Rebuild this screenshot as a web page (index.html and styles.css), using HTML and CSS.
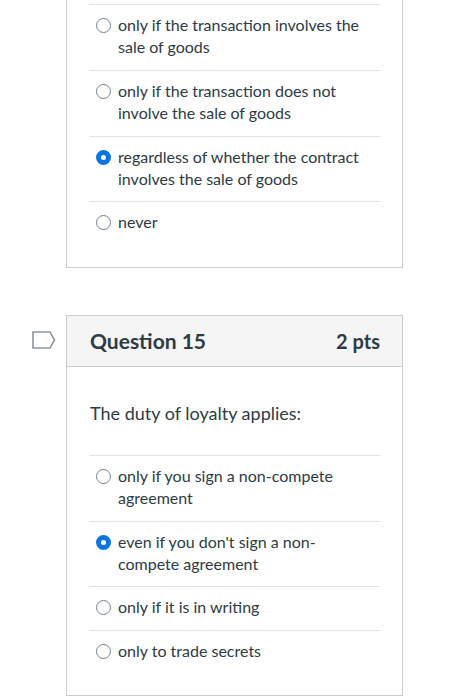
FILE: index.html
```html
<!DOCTYPE html>
<html>
<head>
<meta charset="utf-8">
<link rel="stylesheet" href="styles.css">
</head>
<body>
<div class="question">
  <div class="flag-col"></div>
  <div class="card card-cut">
    <div class="answers">
      <div class="answer"><span class="radio"></span><span class="label">only if the transaction involves the sale of goods</span></div>
      <div class="answer"><span class="radio"></span><span class="label">only if the transaction does not involve the sale of goods</span></div>
      <div class="answer"><span class="radio checked"></span><span class="label">regardless of whether the contract involves the sale of goods</span></div>
      <div class="answer"><span class="radio"></span><span class="label">never</span></div>
    </div>
  </div>
</div>
<div class="question second">
  <div class="flag-col">
    <svg class="flag" width="24" height="18" viewBox="0 0 24 18"><path d="M1 1 H18 L22.5 9 L18 17 H1 Z" fill="none" stroke="#8b969e" stroke-width="1.6" stroke-linejoin="miter"/></svg>
  </div>
  <div class="card">
    <div class="header"><span class="title">Question 15</span><span class="pts">2 pts</span></div>
    <div class="body">
      <p class="prompt">The duty of loyalty applies:</p>
      <div class="answers">
        <div class="answer"><span class="radio"></span><span class="label">only if you sign a non-compete agreement</span></div>
        <div class="answer"><span class="radio checked"></span><span class="label">even if you don't sign a non-compete agreement</span></div>
        <div class="answer"><span class="radio"></span><span class="label">only if it is in writing</span></div>
        <div class="answer"><span class="radio"></span><span class="label">only to trade secrets</span></div>
      </div>
    </div>
  </div>
</div>
</body>
</html>
```
FILE: styles.css
```css
html, body {
  margin: 0;
  padding: 0;
  background: #ffffff;
}
body {
  font-family: Lato, "Open Sans", sans-serif;
  color: #2d3b45;
  font-size: 16px;
}
.question {
  display: flex;
}
.second {
  margin-top: 47px;
}
.flag-col {
  width: 66px;
  flex: none;
  box-sizing: border-box;
  padding: 16px 0 0 32px;
}
.flag {
  display: block;
}
.card {
  width: 337px;
  box-sizing: border-box;
  border: 1px solid #c7cdd1;
}
.card-cut {
  border-top: none;
  padding: 4px 22px 22px 22px;
}
.header {
  background: #f5f5f5;
  border-bottom: 1px solid #c7cdd1;
  height: 51px;
  box-sizing: border-box;
  display: flex;
  align-items: center;
  justify-content: space-between;
  padding: 0 22px 0 23px;
  font-weight: 700;
  font-size: 21px;
}
.pts {
  font-size: 20px;
}
.body {
  padding: 35px 22px 22px 22px;
}
.prompt {
  margin: 0 0 31px 1px;
  font-size: 18px;
  line-height: 22px;
}
.answer {
  display: flex;
  align-items: flex-start;
  border-top: 1px solid #e0e3e5;
  padding: 9px 20px 11px 7px;
  line-height: 22.4px;
}
.radio {
  flex: none;
  width: 15px;
  height: 15px;
  box-sizing: border-box;
  border: 1.5px solid #73818c;
  border-radius: 50%;
  margin-top: 4px;
  margin-right: 7px;
}
.radio.checked {
  border: 5px solid #0b74de;
}
.label {
  flex: 1;
}
```
